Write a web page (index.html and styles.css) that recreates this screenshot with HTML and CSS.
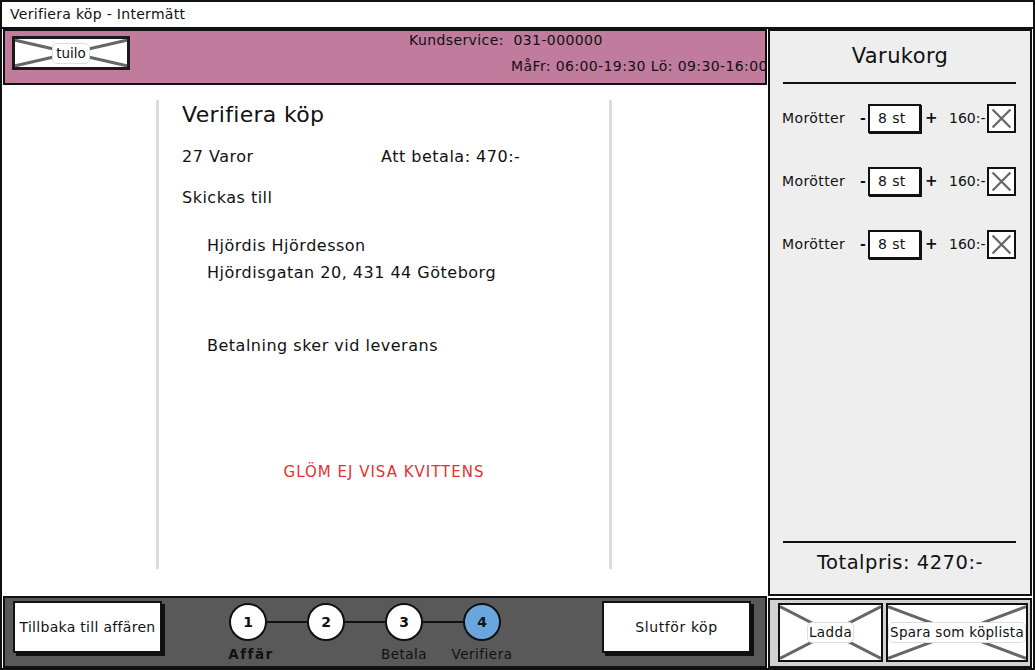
FILE: index.html
```html
<!DOCTYPE html>
<html lang="sv">
<head>
<meta charset="utf-8">
<title>Verifiera köp - Intermätt</title>
<link rel="stylesheet" href="styles.css">
</head>
<body>
<div class="window">
  <div class="titlebar">Verifiera köp - Intermätt</div>
  <div class="main">
    <header class="header">
      <div class="xbox logo">
        <svg class="xlines" viewBox="0 0 100 100" preserveAspectRatio="none"><path d="M0 4 L100 96 M0 96 L100 4"/></svg>
        <span class="pill">tuilo</span>
      </div>
      <div class="contact">
        <div class="line1">Kundservice:&nbsp; 031-000000</div>
        <div class="line2">MåFr: 06:00-19:30 Lö: 09:30-16:00</div>
      </div>
    </header>

    <section class="content">
      <div class="card">
        <h1 class="title">Verifiera köp</h1>
        <div class="summary"><span class="count">27 Varor</span><span>Att betala: 470:-</span></div>
        <div class="label">Skickas till</div>
        <div class="address">
          <div>Hjördis Hjördesson</div>
          <div>Hjördisgatan 20, 431 44 Göteborg</div>
        </div>
        <div class="payment">Betalning sker vid leverans</div>
        <div class="warning">GLÖM EJ VISA KVITTENS</div>
      </div>
    </section>

    <aside class="cart">
      <h2 class="cart-title">Varukorg</h2>
      <div class="rule"></div>
      <div class="items">
        <div class="item">
          <span class="name">Morötter</span><span class="minus">-</span><span class="qty">8 st</span><span class="plus">+</span><span class="price">160:-</span>
          <span class="check"><svg viewBox="0 0 28 28"><path d="M4 4 L24 24 M24 4 L4 24"/></svg></span>
        </div>
        <div class="item">
          <span class="name">Morötter</span><span class="minus">-</span><span class="qty">8 st</span><span class="plus">+</span><span class="price">160:-</span>
          <span class="check"><svg viewBox="0 0 28 28"><path d="M4 4 L24 24 M24 4 L4 24"/></svg></span>
        </div>
        <div class="item">
          <span class="name">Morötter</span><span class="minus">-</span><span class="qty">8 st</span><span class="plus">+</span><span class="price">160:-</span>
          <span class="check"><svg viewBox="0 0 28 28"><path d="M4 4 L24 24 M24 4 L4 24"/></svg></span>
        </div>
      </div>
      <div class="rule bottom-rule"></div>
      <div class="total">Totalpris: 4270:-</div>
    </aside>

    <footer class="bottombar">
      <div class="btn back">Tillbaka till affären</div>
      <div class="steps">
        <div class="step"><span class="circle">1</span><span class="slabel bold">Affär</span></div>
        <span class="connector"></span>
        <div class="step"><span class="circle">2</span><span class="slabel"></span></div>
        <span class="connector"></span>
        <div class="step"><span class="circle">3</span><span class="slabel">Betala</span></div>
        <span class="connector"></span>
        <div class="step"><span class="circle active">4</span><span class="slabel">Verifiera</span></div>
      </div>
      <div class="btn finish">Slutför köp</div>
    </footer>

    <div class="cartbar">
      <div class="xbox load">
        <svg class="xlines" viewBox="0 0 100 100" preserveAspectRatio="none"><path d="M0 3 L100 97 M0 97 L100 3"/></svg>
        <span class="pill">Ladda</span>
      </div>
      <div class="xbox save">
        <svg class="xlines" viewBox="0 0 100 100" preserveAspectRatio="none"><path d="M0 3 L100 97 M0 97 L100 3"/></svg>
        <span class="pill">Spara som köplista</span>
      </div>
    </div>
  </div>
</div>
</body>
</html>
```

FILE: styles.css
```css
* { box-sizing: border-box; margin: 0; padding: 0; }

html, body {
  width: 1035px;
  height: 670px;
  overflow: hidden;
  background: #ffffff;
}

body {
  font-family: "DejaVu Sans", Verdana, sans-serif;
  color: #111;
}

.window {
  width: 1035px;
  height: 670px;
  border: 2px solid #111;
  display: flex;
  flex-direction: column;
  background: #fff;
}

.titlebar {
  height: 27px;
  flex: none;
  border-bottom: 2px solid #111;
  padding-left: 8px;
  font-size: 14px;
  letter-spacing: 0.3px;
  line-height: 24px;
  color: #111;
}

.main {
  flex: 1;
  display: grid;
  grid-template-columns: 765px 1fr;
  grid-template-rows: 56px 1fr 72px;
  column-gap: 1px;
  min-height: 0;
}

/* Header */
.header {
  grid-column: 1;
  grid-row: 1;
  background: #c07b9d;
  border: 2px solid #111;
  display: flex;
  align-items: flex-start;
  overflow: hidden;
  margin-left: 1px;
}

.xbox {
  position: relative;
  background: #fff;
  display: flex;
  align-items: center;
  justify-content: center;
  flex: none;
}

.xlines {
  position: absolute;
  left: 0;
  top: 0;
  width: 100%;
  height: 100%;
}

.xlines path {
  stroke: #666;
  stroke-width: 3;
  fill: none;
  vector-effect: non-scaling-stroke;
}

.pill {
  position: relative;
  background: #fff;
  border: 1px solid #ddd;
  border-radius: 5px;
  padding: 0 3px;
  font-size: 14px;
  line-height: 19px;
  color: #111;
}

.logo {
  width: 118px;
  height: 34px;
  margin-left: 7px;
  margin-top: 5px;
  border: 3px solid #1a1a1a;
}

.logo .pill { font-size: 13.5px; line-height: 19px; }

.contact {
  margin-left: 279px;
  white-space: nowrap;
  font-size: 14px;
  letter-spacing: 0.4px;
  color: #111;
}

.line1 { line-height: 18px; margin-top: 0; }
.line2 { line-height: 18px; margin-top: 8px; padding-left: 102px; }

/* Content */
.content {
  grid-column: 1;
  grid-row: 2;
  background: #fff;
  padding-top: 15px;
  padding-left: 154px;
}

.card {
  width: 456px;
  height: 469px;
  border-left: 3px solid #dcdcdc;
  border-right: 3px solid #dcdcdc;
  padding-left: 23px;
  font-size: 16px;
  letter-spacing: 0.5px;
  line-height: 22px;
}

.title {
  font-size: 22px;
  font-weight: 400;
  letter-spacing: 0.3px;
  line-height: 30px;
}

.summary {
  margin-top: 16px;
  display: flex;
}

.count { width: 199px; }

.label { margin-top: 19px; }

.address {
  margin-top: 23px;
  padding-left: 25px;
  line-height: 27px;
}

.payment {
  margin-top: 49px;
  padding-left: 25px;
}

.warning {
  margin-top: 104px;
  margin-left: -23px;
  text-align: center;
  color: #e23232;
  font-size: 15px;
  letter-spacing: 1px;
}

/* Cart */
.cart {
  grid-column: 2;
  grid-row: 1 / span 2;
  background: #eeeeee;
  border: 2px solid #111;
  margin-right: 1px;
  display: flex;
  flex-direction: column;
}

.cart-title {
  font-size: 21px;
  font-weight: 400;
  letter-spacing: 0.4px;
  text-align: center;
  line-height: 26px;
  margin-top: 12px;
}

.rule {
  height: 2px;
  background: #111;
  margin: 13px 14px 0 13px;
}

.items {
  flex: 1;
  margin-top: 20px;
  display: flex;
  flex-direction: column;
  gap: 35px;
}

.item {
  display: flex;
  align-items: center;
  height: 28px;
  padding-left: 12px;
  font-size: 14px;
  letter-spacing: 0.4px;
}

.name { width: 78px; }
.minus { width: 8px; font-weight: 700; }
.qty {
  width: 53px;
  height: 29px;
  border: 2px solid #111;
  background: #fff;
  line-height: 25px;
  padding-left: 8px;
  box-shadow: 1px 1px 0 #111;
}
.plus { width: 28px; padding-left: 4px; font-weight: 700; font-size: 15px; }
.price { width: 38px; letter-spacing: 0; }
.check {
  width: 29px;
  height: 29px;
  border: 2px solid #111;
  background: #fff;
  display: flex;
}
.check svg { width: 100%; height: 100%; }
.check path { stroke: #666; stroke-width: 2.5; fill: none; }

.bottom-rule { margin-top: 0; margin-bottom: 8px; }

.total {
  text-align: center;
  font-size: 19.5px;
  letter-spacing: 0.5px;
  line-height: 24px;
  margin-bottom: 19px;
}

/* Bottom bar */
.bottombar {
  grid-column: 1;
  grid-row: 3;
  background: #595959;
  border: 2px solid #111;
  margin-left: 1px;
  display: flex;
  align-items: flex-start;
}

.btn {
  background: #fff;
  border: 2px solid #111;
  box-shadow: 3px 3px 0 #111;
  height: 52px;
  display: flex;
  align-items: center;
  justify-content: center;
  font-size: 14px;
  margin-top: 3px;
  white-space: nowrap;
}

.back { width: 149px; margin-left: 8px; letter-spacing: 0.3px; }
.finish { width: 149px; margin-left: auto; margin-right: 14px; letter-spacing: 0.6px; }

.steps {
  display: flex;
  align-items: flex-start;
  margin-left: 67px;
  margin-top: 5px;
}

.step {
  width: 38px;
  display: flex;
  flex-direction: column;
  align-items: center;
}

.circle {
  width: 38px;
  height: 38px;
  border-radius: 50%;
  border: 2px solid #111;
  background: #fff;
  display: flex;
  align-items: center;
  justify-content: center;
  font-weight: 700;
  font-size: 14px;
}

.circle.active { background: #6aa6dd; }

.slabel {
  white-space: nowrap;
  font-size: 13.5px;
  letter-spacing: 0.5px;
  line-height: 16px;
  margin-top: 5px;
  color: #111;
  height: 16px;
}

.slabel.bold { font-weight: 700; letter-spacing: 1.5px; margin-left: 6px; }

.connector {
  width: 40px;
  height: 2px;
  background: #111;
  margin-top: 18px;
}

/* Cart buttons */
.cartbar {
  grid-column: 2;
  grid-row: 3;
  background: #d2d2d2;
  border: 2px solid #111;
  margin-top: 2px;
  margin-right: 1px;
  display: flex;
  align-items: flex-start;
  padding-top: 3px;
  padding-left: 8px;
  gap: 3px;
}

.cartbar .xbox {
  height: 59px;
  border: 2px solid #111;
}

.load { width: 105px; }
.save { width: 142px; }
.cartbar .pill { font-size: 13.5px; padding: 0 1px; white-space: nowrap; letter-spacing: 0.4px; }
.save .pill { letter-spacing: 0.3px; }
```
